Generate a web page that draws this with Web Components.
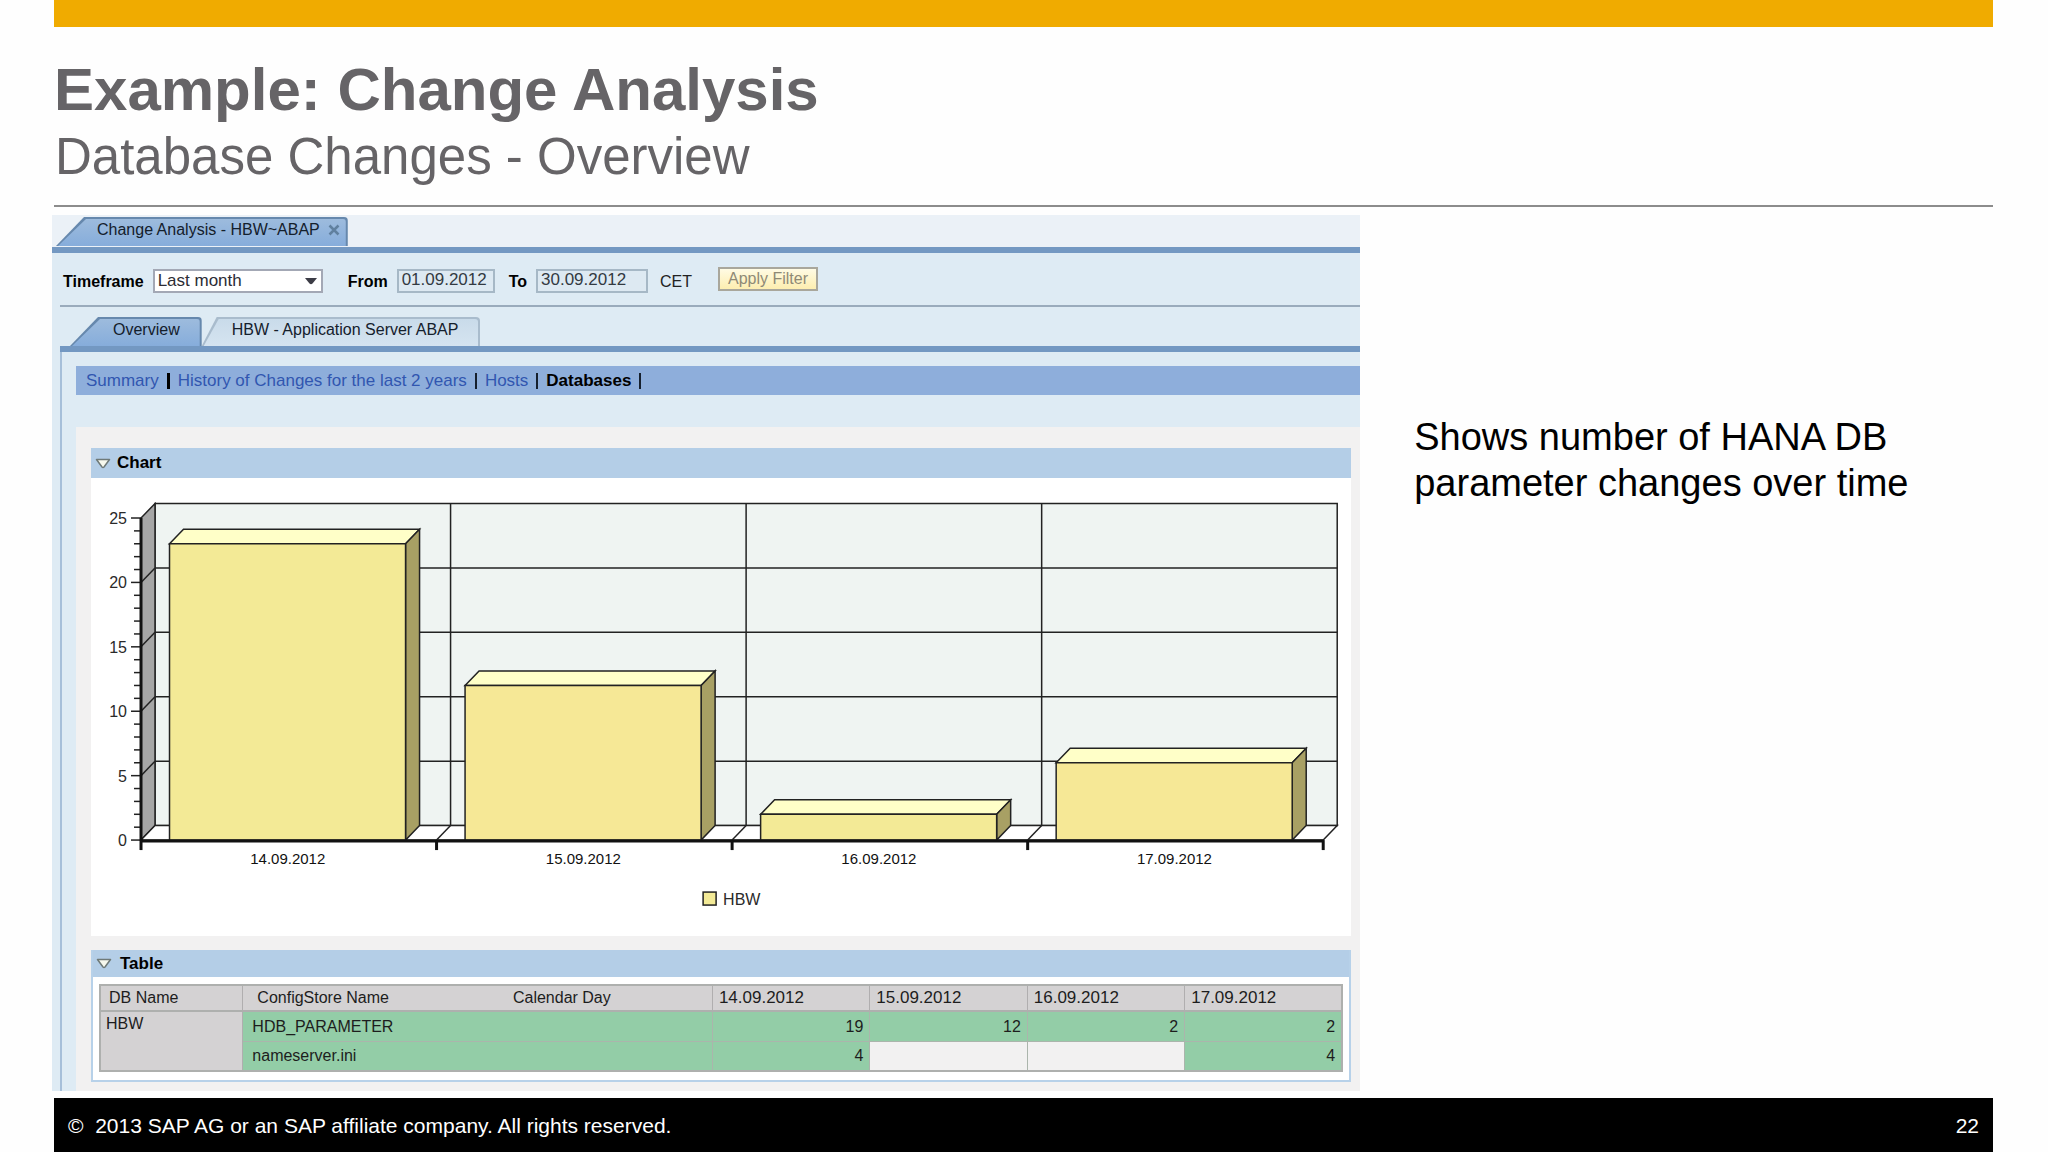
<!DOCTYPE html>
<html lang="en">
<head>
<meta charset="utf-8">
<title>Example: Change Analysis</title>
<style>
  body { margin: 0; background: #fefefe; font-family: "Liberation Sans", Arial, sans-serif; color: #000; }
</style>
</head>
<body>
<slide-page>
  <slide-header slot="header">
    <span slot="title">Example: Change Analysis</span>
    <span slot="subtitle">Database Changes - Overview</span>
  </slide-header>
  <analysis-app></analysis-app>
  <slide-note slot="note">Shows number of HANA DB parameter changes over time</slide-note>
  <slide-footer slot="footer" page="22">©&nbsp; 2013 SAP AG or an SAP affiliate company. All rights reserved.</slide-footer>
</slide-page>

<script>
const define = (name, html, setup) => {
  const template = document.createElement('template');
  template.innerHTML = html;
  customElements.define(name, class extends HTMLElement {
    constructor() {
      super();
      this.attachShadow({ mode: 'open' }).append(template.content.cloneNode(true));
    }
    connectedCallback() { if (setup) setup(this, this.shadowRoot); }
  });
};

define('slide-page', `
  <style>
    :host { display: flex; flex-direction: column; min-height: 100vh; box-sizing: border-box; padding: 0 55px 0 54px; }
    main { display: grid; grid-template-columns: 67.4% 1fr; align-items: start; margin: 8px 0 7px -2px; }
    .foot { margin-top: auto; }
  </style>
  <slot name="header"></slot>
  <main><slot></slot><slot name="note"></slot></main>
  <div class="foot"><slot name="footer"></slot></div>`);

define('slide-header', `
  <style>
    :host { display: block; border-top: 27px solid #f0ab00; border-bottom: 2px solid #8c8c8c; padding: 27px 0 17px; color: #666467; }
    h1, p { margin: 0; font-weight: 400; }
    h1 { font-size: 60px; line-height: 72px; font-weight: 700; }
    p { font-size: 51px; line-height: 62px; padding-left: 1px; }
  </style>
  <h1><slot name="title"></slot></h1>
  <p><slot name="subtitle"></slot></p>`);

define('slide-note', `
  <style>:host { display: block; padding: 199px 40px 0 54px; font-size: 38px; line-height: 46px; }</style>
  <slot></slot>`);

define('slide-footer', `
  <style>
    :host { display: block; background: #000; color: #fff; font-size: 21px; }
    footer { display: flex; justify-content: space-between; padding: 16px 14px 14px; line-height: 24px; }
  </style>
  <footer><span><slot></slot></span><span class="page"></span></footer>`,
  (el, root) => { root.querySelector('.page').textContent = el.getAttribute('page'); });

define('app-tab', `
  <style>
    :host { display: flex; --slant: 28px; --edge: #6688ad; --top: #9dbbdd; --bottom: #86addb; }
    :host([quiet]) { --slant: 15px; --edge: #a9bccd; --top: #c9dbea; --bottom: #d5e4f0; }
    button {
      display: flex; align-items: center; position: relative; box-sizing: border-box; width: 100%;
      border: 0; border-radius: 0 4px 0 0; margin: 0; padding: 0 var(--end, 20px) 3px var(--start, 42px); height: 29px;
      font: 16px/20px "Liberation Sans", Arial, sans-serif; color: #14202c; background: var(--edge); white-space: nowrap;
      clip-path: polygon(0 100%, var(--slant) 0, 100% 0, 100% 100%);
    }
    button::before {
      content: ""; position: absolute; inset: 2px 2px 0 2px; border-radius: 0 3px 0 0;
      background: linear-gradient(var(--top), var(--bottom));
      clip-path: polygon(0 100%, var(--slant) 0, 100% 0, 100% 100%);
    }
    span { display: flex; align-items: center; gap: 8px; position: relative; }
  </style>
  <button type="button"><span><slot></slot></span></button>`);

define('filter-bar', `
  <style>
    :host { display: block; }
    form { display: flex; align-items: center; height: 52px; padding: 4px 11px 0; box-sizing: border-box; font-size: 16px; white-space: nowrap; }
    label { font-weight: 700; margin-right: 9px; padding-top: 2px; }
    select, input, button { box-sizing: border-box; margin: 0; font: 17px/20px "Liberation Sans", Arial, sans-serif; border-radius: 0; }
    .pick { display: grid; align-items: center; width: 170px; margin-right: 25px; }
    .pick > * { grid-area: 1 / 1; }
    .pick svg { justify-self: end; margin-right: 6px; pointer-events: none; }
    select { appearance: none; width: 100%; height: 24px; padding: 0 3px 2px; border: 2px solid #a3a8b5; background: #fff; color: #2c2c34; }
    input { width: 98px; height: 24px; padding: 0 3px 2px; border: 2px solid #a6b8c6; background: #dde9f2; color: #333a42; margin-right: 14px; }
    input.wide { width: 112px; margin-right: 12px; }
    button { width: 100px; height: 24px; padding: 0; margin: 0 0 4px 26px; font-size: 16px; line-height: 18px; color: #8f8a76; border: 2px solid #a9a79c; background: linear-gradient(#fffbe4, #fdeeb0); }
    .zone { padding-top: 2px; color: #222; }
  </style>
  <form>
    <label for="frame">Timeframe</label>
    <span class="pick">
      <select id="frame"><option>Last month</option></select>
      <svg width="12" height="8" viewBox="0 0 12 8"><path d="M0 1h12L7.500 6.500Q6 8 4.500 6.500Z" fill="#3c3c46"/></svg>
    </span>
    <label for="from">From</label><input id="from" value="01.09.2012">
    <label for="to">To</label><input id="to" class="wide" value="30.09.2012">
    <span class="zone">CET</span>
    <button type="button">Apply Filter</button>
  </form>`);

define('link-bar', `
  <style>
    nav { display: flex; align-items: center; gap: 8px; height: 29px; padding: 1px 0 0 10px; box-sizing: border-box; background: #8eaedb; font-size: 17px; line-height: 20px; white-space: nowrap; }
    :host { display: block; }
    a { color: #3156b0; text-decoration: none; }
    a[aria-current] { color: #000; font-weight: 700; }
    i { width: 2px; height: 16px; background: #16202e; }
    i.strong { width: 3px; background: #000; }
  </style>
  <nav>
    <a href="#summary">Summary</a><i class="strong"></i>
    <a href="#history">History of Changes for the last 2 years</a><i></i>
    <a href="#hosts">Hosts</a><i></i>
    <a href="#databases" aria-current="page">Databases</a><i></i>
  </nav>`);

define('app-tray', `
  <style>
    :host { display: block; background: #fff; }
    :host([framed]) { border: 2px solid #b7d1e9; border-top: 0; }
    h2 { display: flex; align-items: center; gap: 6px; margin: 0; height: 30px; padding-left: 4px; background: #b4cee7; font-size: 17px; line-height: 20px; }
    :host([framed]) h2 { height: 27px; padding-left: 3px; gap: 8px; }
  </style>
  <h2><svg width="16" height="11" viewBox="0 0 16 11"><path d="M1.500 1.500h13L9 9Q8 10 7 9Z" fill="#f7f9ee" stroke="#6f7a78" stroke-width="1.500" stroke-linejoin="round"/></svg><slot name="title"></slot></h2>
  <slot></slot>`);

define('bar-chart', `
  <style>
    :host { display: block; }
    svg { display: block; width: 100%; height: auto; }
    text { font-family: "Liberation Sans", Arial, sans-serif; font-size: 16px; fill: #2a2a2a; }
    .date { font-size: 15px; fill: #111; }
    .line { stroke: #222; stroke-width: 1.5; fill: none; }
    .axis { stroke: #111; stroke-width: 3; fill: none; }
  </style>
  <svg viewBox="0 0 1260 458" role="img" aria-label="HBW changes per day"></svg>`,
  (el, root) => {
    const data = [['14.09.2012', 23], ['15.09.2012', 12], ['16.09.2012', 2], ['17.09.2012', 6]];
    const left = 50, base = 362, unit = 12.88, step = 295.5, depth = 14, rise = 14.5;
    const right = left + step * 4, top = base - 25 * unit;
    const line = (x1, y1, x2, y2, c = 'line') => `<path class="${c}" d="M${x1} ${y1}L${x2} ${y2}"/>`;
    let s = `<rect class="line" style="fill:#eff4f2" x="${left + depth}" y="${top - rise}" width="${right - left}" height="${base - top}"/>`;
    s += `<path class="line" style="fill:#a6a6a6" d="M${left} ${base}V${top}l${depth} ${-rise}V${base - rise}Z"/>`;
    s += `<path class="line" style="fill:#fff" d="M${left} ${base}l${depth} ${-rise}H${right + depth}L${right} ${base}Z"/>`;
    for (let v = 0; v <= 25; v++) {
      const y = base - v * unit;
      if (v % 5) { s += line(left - 7, y, left, y); continue; }
      s += line(left - 10, y, left, y) + `<text x="${left - 14}" y="${y + 6}" text-anchor="end">${v}</text>`;
      if (v && v < 25) s += line(left, y, left + depth, y - rise) + line(left + depth, y - rise, right + depth, y - rise);
    }
    data.forEach(([name, value], i) => {
      const x = left + step * i, x1 = x + 28.5, x2 = x1 + 236, y = base - value * unit;
      if (i) s += line(x, base, x + depth, base - rise) + line(x + depth, base - rise, x + depth, top - rise);
      s += `<path class="line" style="fill:#ffffc8" d="M${x1} ${y}l${depth} ${-rise}H${x2 + depth}L${x2} ${y}Z"/>`;
      s += `<path class="line" style="fill:#a8a064" d="M${x2} ${y}l${depth} ${-rise}V${base - rise}L${x2} ${base}Z"/>`;
      s += `<path class="line" style="fill:${i % 2 ? '#f6e896' : '#f3ea96'}" d="M${x1} ${base}V${y}H${x2}V${base}Z"/>`;
      s += `<text class="date" x="${x + step / 2 - 1}" y="386" text-anchor="middle">${name}</text>`;
    });
    s += line(left, top, left, base, 'axis') + line(left - 1, base + 1, right, base + 1, 'axis');
    for (let i = 0; i <= 4; i++) s += line(left + step * i, base, left + step * i, base + 10, 'axis');
    s += `<rect class="line" style="fill:#f3ea96" x="612" y="414" width="13" height="13"/><text x="632" y="427">HBW</text>`;
    root.querySelector('svg').innerHTML = s;
  });

define('change-table', `
  <style>
    :host { display: block; padding: 7px 6px 8px; }
    table { width: 100%; table-layout: fixed; border-collapse: collapse; border: 2px solid #aeb0ae; font-size: 16px; line-height: 20px; }
    th, td { border: 1px solid #abb5ac; padding: 0 6px; text-align: left; font-weight: 400; color: #1d1d1d; }
    th { background: #d4d2d3; border-color: #b0aeaf; height: 26px; padding-bottom: 1px; box-sizing: border-box; border-bottom: 2px solid #aeb0ae; }
    td { background: #93cda7; height: 30px; box-sizing: border-box; padding-top: 1px; text-align: right; }
    .name { text-align: left; padding-left: 9px; }
    .date { font-size: 17px; padding-bottom: 1px; }
    tbody th { vertical-align: top; padding: 2px 5px 0; }
    thead .store { border-right: 0; padding-left: 14px; }
    thead .day { border-left: 0; padding-left: 8px; }
    thead .first { padding-left: 8px; }
    .none { background: #f2f1f1; }
  </style>
  <table>
    <colgroup><col style="width:11.500%"><col style="width:21.100%"><col style="width:16.700%"><col><col><col><col></colgroup>
    <thead><tr><th class="first">DB Name</th><th class="store">ConfigStore Name</th><th class="day">Calendar Day</th>
      <th class="date">14.09.2012</th><th class="date">15.09.2012</th><th class="date">16.09.2012</th><th class="date">17.09.2012</th></tr></thead>
    <tbody>
      <tr><th rowspan="2">HBW</th><td class="name" colspan="2">HDB_PARAMETER</td><td>19</td><td>12</td><td>2</td><td>2</td></tr>
      <tr><td class="name" colspan="2">nameserver.ini</td><td>4</td><td class="none"></td><td class="none"></td><td>4</td></tr>
    </tbody>
  </table>`);

define('analysis-app', `
  <style>
    :host { display: block; background: #deebf4; }
    .top { display: flex; align-items: flex-end; height: 30px; padding: 1px 0 1px 4px; background: #ebf1f7; border-bottom: 6px solid #7398c2; }
    .top app-tab { --start: 41px; --end: 8px; }
    .tabs { display: flex; align-items: flex-end; margin-left: 8px; padding: 10px 0 0 10px; border-top: 2px solid #9aabbc; border-bottom: 6px solid #7398c2; }
    .tabs app-tab { --start: 43px; --end: 22px; }
    .tabs app-tab[quiet] { --start: 30px; }
    .view { margin-left: 8px; border-left: 2px solid #a6bfd9; padding: 14px 0 0 14px; }
    link-bar { margin-bottom: 32px; }
    .panel { display: flex; flex-direction: column; gap: 14px; padding: 21px 9px 9px 15px; background: #f2f1f1; }
  </style>
  <div class="top"><app-tab>Change Analysis - HBW~ABAP <svg width="12" height="12" viewBox="0 0 12 12"><path d="M1.500 1.500l9 9M10.500 1.500l-9 9" stroke="#60809f" stroke-width="2.500"/></svg></app-tab></div>
  <filter-bar></filter-bar>
  <div class="tabs"><app-tab>Overview</app-tab><app-tab quiet>HBW - Application Server ABAP</app-tab></div>
  <div class="view">
    <link-bar></link-bar>
    <div class="panel">
      <app-tray><span slot="title">Chart</span><bar-chart></bar-chart></app-tray>
      <app-tray framed><span slot="title">Table</span><change-table></change-table></app-tray>
    </div>
  </div>`);
</script>
</body>
</html>
